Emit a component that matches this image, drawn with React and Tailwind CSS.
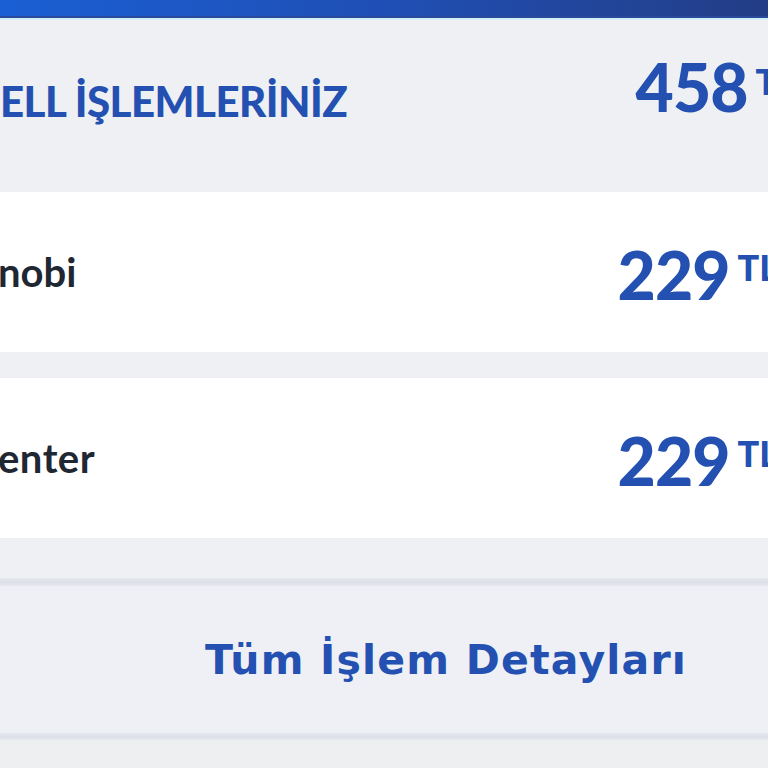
export default function App() {
  return (
    <div className="w-[768px] h-[768px] overflow-hidden bg-[#eef0f3] font-['Lato','Noto_Sans',sans-serif]">
      <div className="h-[16px] bg-gradient-to-r from-[#1a5fd4] via-[#1f4fb5] to-[#233d86]" />
      <div className="h-[2px] bg-[#2b4a98]" />
      <div className="h-[2px] bg-[#d2effc]" />
      <div className="h-[172px] bg-[#eef0f3] flex justify-between">
        <div className="pt-[56px] text-[42px] leading-[50px] font-black text-[#2350b1] whitespace-nowrap tracking-[-0.5px]">ELL İŞLEMLERİNİZ</div>
        <div className="flex items-start pt-[27px] mr-[-28px] shrink-0">
          <span className="text-[66px] leading-[80px] font-black text-[#2350b1] tracking-[-1px]">458</span>
          <span className="ml-[8px] mt-[14px] text-[36px] leading-[40px] font-black text-[#2350b1]">TL</span>
        </div>
      </div>
      <div className="h-[160px] bg-white flex justify-between items-center">
        <div className="text-[40px] font-bold text-[#1f2733] whitespace-nowrap ml-[-2px]">nobi</div>
        <div className="flex items-start shrink-0 mr-[-10px] mt-[5px]">
          <span className="text-[66px] leading-[80px] font-black text-[#2350b1] tracking-[-1px]">229</span>
          <span className="ml-[8px] mt-[12px] text-[36px] leading-[40px] font-black text-[#2350b1]">TL</span>
        </div>
      </div>
      <div className="h-[26px]" />
      <div className="h-[160px] bg-white flex justify-between items-center">
        <div className="text-[40px] font-bold text-[#1f2733] whitespace-nowrap ml-[-2px] tracking-[0.5px]">enter</div>
        <div className="flex items-start shrink-0 mr-[-10px] mt-[5px]">
          <span className="text-[66px] leading-[80px] font-black text-[#2350b1] tracking-[-1px]">229</span>
          <span className="ml-[8px] mt-[12px] text-[36px] leading-[40px] font-black text-[#2350b1]">TL</span>
        </div>
      </div>
      <div className="h-[40px]" />
      <div className="h-[8px] bg-gradient-to-b from-[#e8eaf0] via-[#dcdfe8] to-[#e6e9f0]" />
      <div className="h-[147px] bg-[#eef0f5] flex items-center">
        <div className="pl-[205px] pt-[3px] text-[41px] font-bold text-[#2350b1] whitespace-nowrap tracking-[1.2px] font-['DejaVu_Sans','Open_Sans',sans-serif]">Tüm İşlem Detayları</div>
      </div>
      <div className="h-[7px] bg-gradient-to-b from-[#e6e9f0] via-[#dcdfe8] to-[#e8eaf0]" />
      <div className="h-[40px] bg-[#eeeff1]" />
    </div>
  );
}
